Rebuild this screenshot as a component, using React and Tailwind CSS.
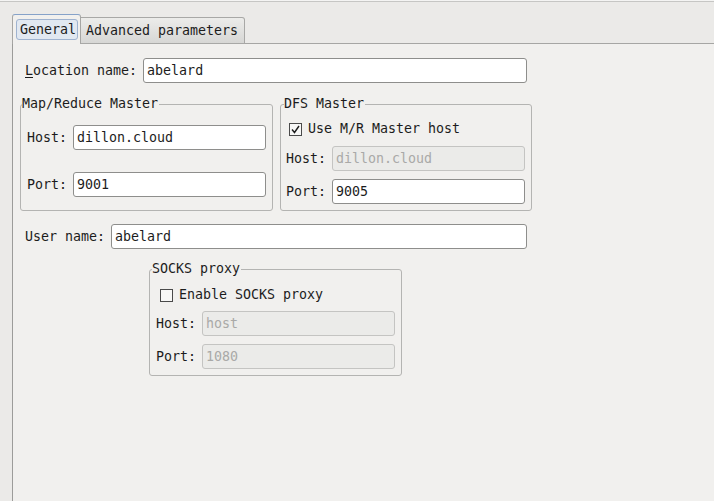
import React from 'react';

const mono = { fontFamily: '"DejaVu Sans Mono", "Liberation Mono", monospace' };

const TextBox = ({ value, width, disabled, height = 'h-[25px]' }) => (
    <div
        className={`${height} ${width} flex items-center pl-[3px] rounded-[3px] border ${
            disabled ? 'bg-[#ebebe9] border-[#c4c4c2] text-[#a9a9a7]' : 'bg-white border-[#8e8e8c] text-[#1c1c1c]'
        }`}
    >
        {value}
    </div>
);

const CheckBox = ({ checked, label }) => (
    <div className="flex items-center h-[20px]">
        <span className="w-[13px] h-[13px] border border-[#4a4a4a] bg-[#f7f7f6] flex items-center justify-center">
            {checked && (
                <svg width="11" height="11" viewBox="0 0 11 11">
                    <path d="M2 5.5 L4.5 8.5 L9 2" fill="none" stroke="#1c1c1c" strokeWidth="1.4" />
                </svg>
            )}
        </span>
        <span className="ml-[6px]">{label}</span>
    </div>
);

const Group = ({ title, className, legendClass, children }) => (
    <fieldset className={`border border-[#b4b4b2] rounded-[3px] ${className}`}>
        <legend className={`${legendClass} pr-[1px] leading-[16px]`}>{title}</legend>
        {children}
    </fieldset>
);

const Row = ({ label, children, className = '' }) => (
    <div className={`flex items-center ${className}`}>
        <span className="w-[46px]">{label}</span>
        {children}
    </div>
);

export default function App() {
    return (
        <div className="w-[714px] h-[501px] bg-[#ebeae8] flex flex-col text-[13.3px] text-[#1c1c1c] overflow-hidden" style={mono}>
            {/* top edge */}
            <div className="h-px bg-[#f4f4f3]" />
            <div className="h-px bg-[#c6c6c4]" />

            {/* tab strip */}
            <div className="flex items-end h-[42px] pl-[12px]">
                <div className="w-[69px] h-[30px] border border-b-0 border-[#a6a6a4] border-t-[#86a2c9] rounded-t-[3px] bg-[#f1f0ee] pt-[4px] pl-[3px]">
                    <div className="w-[62px] h-[21px] rounded-[3px] border border-[#9fb3d0] bg-[#e1e8f1] flex items-center pl-[3px]">
                        General
                    </div>
                </div>
                <div className="w-[164px] h-[27px] border border-l-0 border-[#a8a8a6] rounded-tr-[3px] bg-gradient-to-b from-[#ececea] to-[#d7d7d5] flex items-center pl-[5px]">
                    Advanced parameters
                </div>
                <div className="flex-1 h-px bg-[#a6a6a4]" />
            </div>

            {/* page */}
            <div className="flex-1 ml-[12px] border-l border-[#9c9c9a] bg-[#f1f0ee] pl-[7px]">
                <div className="flex items-center mt-[14px] ml-[5px]">
                    <span>
                        <span className="underline underline-offset-2">L</span>ocation name:
                    </span>
                    <div className="ml-[6px]">
                        <TextBox value="abelard" width="w-[384px]" height="h-[25px]" />
                    </div>
                </div>

                <div className="flex items-stretch mt-[13px]">
                    <Group title="Map/Reduce Master" legendClass="-ml-[5px]" className="w-[253px] px-[6px] pb-[13px]">
                        <Row label="Host:" className="mt-[13px]">
                            <TextBox value="dillon.cloud" width="w-[193px]" />
                        </Row>
                        <Row label="Port:" className="mt-[22px]">
                            <TextBox value="9001" width="w-[193px]" />
                        </Row>
                    </Group>
                    <Group title="DFS Master" legendClass="-ml-[2px]" className="w-[252px] ml-[7px] px-[5px] pb-[6px]">
                        <div className="mt-[7px] pl-[3px]">
                            <CheckBox checked label="Use M/R Master host" />
                        </div>
                        <Row label="Host:" className="mt-[7px]">
                            <TextBox value="dillon.cloud" width="w-[193px]" disabled />
                        </Row>
                        <Row label="Port:" className="mt-[8px]">
                            <TextBox value="9005" width="w-[193px]" />
                        </Row>
                    </Group>
                </div>

                <div className="flex items-center mt-[13px] ml-[5px]">
                    <span>User name:</span>
                    <div className="ml-[6px]">
                        <TextBox value="abelard" width="w-[416px]" height="h-[25px]" />
                    </div>
                </div>

                <Group title="SOCKS proxy" legendClass="-ml-[4px]" className="w-[253px] ml-[129px] mt-[12px] px-[6px] pb-[6px]">
                    <div className="mt-[8px] pl-[4px]">
                        <CheckBox label="Enable SOCKS proxy" />
                    </div>
                    <Row label="Host:" className="mt-[6px]">
                        <TextBox value="host" width="w-[193px]" disabled />
                    </Row>
                    <Row label="Port:" className="mt-[8px]">
                        <TextBox value="1080" width="w-[193px]" disabled />
                    </Row>
                </Group>
            </div>
        </div>
    );
}
